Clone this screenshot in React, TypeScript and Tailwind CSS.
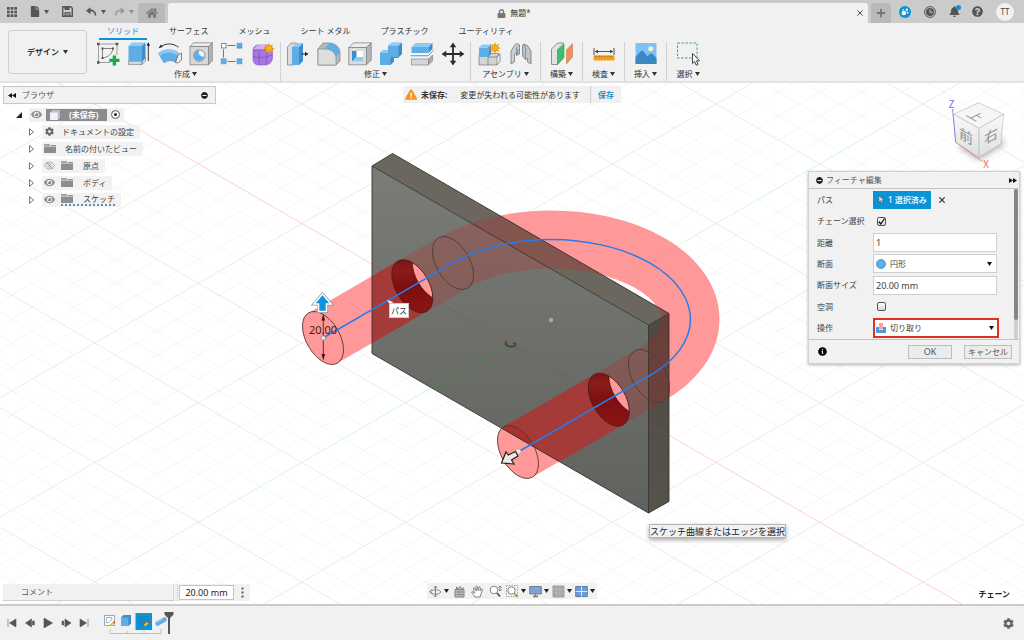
import React from "react";
import {
  FaBell,
  FaCog,
  FaExclamationTriangle,
  FaEye,
  FaFile,
  FaHome,
  FaInfoCircle,
  FaLock,
  FaMinusCircle,
  FaPlus,
  FaQuestionCircle,
} from "react-icons/fa";

type Children = { children: React.ReactNode };

const BLUE = "#5fade6";
const LIGHT = "#8fcbf5";
const DARK = "#3d8ccb";
const EDGE = "#7a7a7a";

function Caret({ className = "" }: { className?: string }) {
  return (
    <svg viewBox="0 0 5 4" className={`h-1 w-[5px] shrink-0 ${className}`} aria-hidden="true">
      <path d="M0 0h5L2.5 4z" fill="currentColor" />
    </svg>
  );
}

function Icon({ children }: Children) {
  return (
    <svg viewBox="0 0 24 24" className="h-6 w-6 shrink-0" fill="none" aria-hidden="true">
      {children}
    </svg>
  );
}

function Spark({ x, y }: { x: number; y: number }) {
  return (
    <g transform={`translate(${x} ${y})`} fill="#f59a0c">
      <path d="M0-6 1.2-2.9 4.2-4.2 2.9-1.2 6 0 2.9 1.2 4.2 4.2 1.2 2.9 0 6-1.2 2.9-4.2 4.2-2.9 1.2-6 0-2.9-1.2-4.2-4.2-1.2-2.9z" />
      <circle r="2.4" fill="#fdb515" />
    </g>
  );
}

/* ---------- ribbon icons ---------- */

const SketchIcon = () => (
  <Icon>
    <path d="M2.5 2v18.5H14M2.5 2H21v11" stroke="#8a8a8a" strokeWidth=".8" />
    <path d="M6.5 6.500h10.500M6.500 6.500v9.500M6.500 16c6-1 9.500-4 10.500-9.500" stroke="#666" strokeWidth=".8" />
    <path d="M1 .7h2.600v2.600H1zM19.700.7h2.600v2.600h-2.600zM1 19.200h2.600v2.600H1zM5.500 5.500h2v2h-2zM16 5.500h2v2h-2zM5.500 15h2v2h-2z" fill="#555" />
    <path d="M16.700 13.500h3.400v3.300h3.400v3.300h-3.400v3.400h-3.400v-3.400h-3.300v-3.300h3.300z" fill="#22a84b" />
  </Icon>
);
const ExtrudeIcon = () => (
  <Icon>
    <path d="M1.500 19h13.500v3.500H1.500zM15 19l3.500-3.500v3.500L15 22.500z" fill="#d8d8d8" stroke={EDGE} strokeWidth=".6" />
    <path d="M1.500 4h13.500v15.500H1.500z" fill={BLUE} />
    <path d="M1.500 4 5 .5h13.500L15 4z" fill={LIGHT} />
    <path d="M15 4 18.500.5V16L15 19.500z" fill={DARK} />
    <path d="M21.300 3v16" stroke="#222" strokeWidth=".9" />
    <path d="m21.300 0 1.700 3.800h-3.400z" fill="#222" />
  </Icon>
);
const RevolveIcon = () => (
  <Icon>
    <path d="M.5 11.500C6 6.500 15 6.500 20.500 11l-3 9.500c-3-2.500-8-2.500-11.500.500z" fill={BLUE} stroke={DARK} strokeWidth=".5" />
    <path d="M.5 11.500C6 6.500 15 6.500 20.500 11l-.8 2.500C14 9.500 7 9.500 1.900 14z" fill={LIGHT} />
    <path d="m20 13 3.500-2v7l-3.500 3-2.500-.5z" fill="#eee" stroke="#555" strokeWidth=".7" />
    <path d="M3 4.500C8 1 15 1 20.500 5.200" stroke="#222" strokeWidth=".9" />
    <path d="M.5 6.200 4.700 5 3 2.500z" fill="#222" />
  </Icon>
);
const HoleIcon = () => (
  <Icon>
    <path d="M1 4.500 4.500.8H23.300L19.500 4.500z" fill="#ececec" stroke={EDGE} strokeWidth=".7" />
    <path d="M19.500 4.500 23.300.8v18l-3.800 4z" fill="#b5b5b5" stroke={EDGE} strokeWidth=".7" />
    <path d="M1 4.500h18.500v18.300H1z" fill="#d7d7d7" stroke={EDGE} strokeWidth=".7" />
    <circle cx="10.300" cy="13.600" r="5.700" fill="#f5f5f5" stroke="#666" strokeWidth=".7" />
    <path d="M10.300 8.300a5.300 5.300 0 1 0 5.200 6.200c-4 .8-7-2.300-5.200-6.200z" fill={BLUE} />
  </Icon>
);
const PatternIcon = () => (
  <Icon>
    <path d="M7.500 3.500h8M3.500 7.500v8M7.500 19.500h8" stroke="#666" strokeWidth=".9" />
    <path d="M1.500 1.500h4.500V6H1.500z" fill="#fff" stroke="#666" strokeWidth=".8" />
    <path d="M17 1.200h5v5h-5zM1.200 16.800h5v5h-5zM17 16.800h5v5h-5z" fill={BLUE} stroke={DARK} strokeWidth=".5" />
  </Icon>
);
const FormIcon = () => (
  <Icon>
    <path d="M2 9c0-4 2-6 6-6h7c4 0 6.500 2 6.500 5v7c0 5-3 8-8 8H8c-4 0-6-2.500-6-6z" fill="#a877e4" stroke="#8853c8" strokeWidth=".6" />
    <path d="M3 7.500C4 4.500 6 3 9 3h6l-2 5z" fill="#cfaef4" />
    <path d="M2 14.500c5 1 9 1 13 .5l6.500-2M8.500 8c-.6 5-.6 10 0 15M15.500 8c.6 5 .6 9-.5 14.700M2.500 8.500c4-.8 9-.8 13 0" stroke="#7d4cc0" strokeWidth=".7" />
    <Spark x={18} y={6.500} />
  </Icon>
);
const PressPullIcon = () => (
  <Icon>
    <path d="M1.500 5 5 1h6v18l-4 4H1.500z" fill="#ddd" stroke={EDGE} strokeWidth=".7" />
    <path d="M6 5h7v18H6z" fill={BLUE} />
    <path d="M6 5 10 1h7l-4 4z" fill={LIGHT} />
    <path d="m13 5 4-4v18l-4 4z" fill={DARK} />
    <path d="M15.500 12H20" stroke="#222" />
    <path d="M22.500 12 19 9.800v4.400z" fill="#222" />
  </Icon>
);
const FilletIcon = () => (
  <Icon>
    <path d="M1 7 6 1h6c6 0 11 4 11 10v8l-4 4H1z" fill="#b9b9b9" stroke={EDGE} strokeWidth=".7" />
    <path d="M1 7h7c6 0 11 4 11 9v7H1z" fill="#dedede" stroke={EDGE} strokeWidth=".6" />
    <path d="m8 6.500 4-5.300c6 .2 10.800 4.300 10.800 10.300l-4 3.500C18 10 13.500 7 8 6.500z" fill={BLUE} />
  </Icon>
);
const ShellIcon = () => (
  <Icon>
    <path d="M.8 5.500 5.500.8h17.700L18.500 5.500z" fill="#ececec" stroke={EDGE} strokeWidth=".7" />
    <path d="m18.500 5.500 4.700-4.700V18l-4.700 4.800z" fill="#b5b5b5" stroke={EDGE} strokeWidth=".7" />
    <path d="M.8 5.500h17.700v17.300H.8z" fill="#dcdcdc" stroke={EDGE} strokeWidth=".7" />
    <path d="M4 9h11v10.500H4z" fill="#fff" />
    <path d="M4 9v10.500L8.500 15V9z" fill={DARK} />
    <path d="M4 19.500h11V15H8.500z" fill={LIGHT} />
  </Icon>
);
const CombineIcon = () => (
  <Icon>
    <path d="m1 11 3-2.800h5V4l3.500-3.300H23V12l-4 4h-4v3.500L11.500 23H1z" fill={DARK} />
    <path d="M1 11h8V4h10.500v11h-8v8H1z" fill={BLUE} />
    <path d="M9 4 12.500.7H23L19.500 4zM1 11l3-2.800h5V11z" fill={LIGHT} />
  </Icon>
);
const SplitIcon = () => (
  <Icon>
    <path d="m1.500 5 4-4h17l-4 4z" fill={LIGHT} />
    <path d="M1.500 5h17v6h-17z" fill={BLUE} />
    <path d="m18.500 5 4-4v6l-4 4z" fill={DARK} />
    <path d="M1.500 17h17v6h-17z" fill="#d6d6d6" stroke={EDGE} strokeWidth=".6" />
    <path d="m18.500 17 4-4v6l-4 4z" fill="#aaa" stroke={EDGE} strokeWidth=".6" />
    <path d="M.5 13.800h17.800L23.500 8" stroke="#fff" strokeWidth="2.600" />
    <path d="M.5 13.800h17.800L23.500 8" stroke={DARK} />
  </Icon>
);
const MoveIcon = () => (
  <Icon>
    <path d="M12 3v18M3 12h18" stroke="#2b2b2b" strokeWidth="1.800" />
    <path d="m12 .5 3.200 4.800H8.800zM12 23.500l3.200-4.800H8.800zM.5 12l4.800-3.200v6.400zM23.500 12l-4.800-3.200v6.400z" fill="#2b2b2b" />
  </Icon>
);
const ComponentIcon = () => (
  <Icon>
    <path d="m1 13 2-1.500h18L19 15v8H1z" fill="#d4d4d4" stroke={EDGE} strokeWidth=".7" />
    <path d="M10 15v8M10 15h9l3-3v7.500L19 23" stroke={EDGE} strokeWidth=".8" />
    <path d="M1 5.500h9.500V15H1z" fill={BLUE} />
    <path d="m1 5.500 3-3h9l-2.500 3z" fill={LIGHT} />
    <path d="m10.500 5.500 2.500-3V12l-2.500 3z" fill={DARK} />
    <Spark x={17} y={6} />
  </Icon>
);
const JointIcon = () => (
  <Icon>
    <path d="M2 9 6 2.500 9 1.500l1.500 1.500v9l-3 1.500v-3L5.500 12v8L2 22z" fill="#cfcfcf" stroke="#777" strokeWidth=".8" />
    <path d="M7.500 13.500V6l3-3" stroke="#777" strokeWidth=".7" />
    <path d="M22 9 18.500 3.500l-4-1.500-1 2v10l3 3.500 2-1v3.500l3.500 2z" fill="#c4c4c4" stroke="#777" strokeWidth=".8" />
    <path d="M16.500 17.500V6l-2-3.500" stroke="#777" strokeWidth=".7" />
    <path d="M8.800 7v5M13.800 9v5" stroke={BLUE} strokeWidth="1.300" />
  </Icon>
);
const PlaneIcon = () => (
  <Icon>
    <path d="M1.500 7 7.500 1h6v14l-6 7.500h-6z" fill="#e2e2e2" stroke={EDGE} strokeWidth=".8" />
    <path d="M7.500 7.500 14 2v13.500l-6.500 7z" fill="#3fbf6b" stroke="#2d9b52" strokeWidth=".6" />
    <path d="m16.500 8 6-6.500V15l-6 7z" fill="#e8935c" stroke="#cf7a44" strokeWidth=".6" />
  </Icon>
);
const MeasureIcon = () => (
  <Icon>
    <path d="M2 6v7M22 6v7M4 9.500h16" stroke="#444" strokeWidth=".9" />
    <path d="m2.500 9.500 3.500-1.800v3.600zM21.500 9.500 18 7.700v3.600z" fill="#444" />
    <path d="M1.500 13.500h21v5h-21z" fill="#f7a11b" />
    <path d="M4 13.500v2M7 13.500v2M10 13.500v2M13 13.500v2M16 13.500v2M19 13.500v2" stroke="#8a5300" strokeWidth=".8" />
  </Icon>
);
const InsertIcon = () => (
  <Icon>
    <path d="M1.500 1h21v21h-21z" fill="#7cc3f5" />
    <path d="M1.500 15 7 9c1-.8 1.800-.3 2.500.5l4 5 2.500-2.700c.8-.6 1.500-.5 2.200 0L22.500 16v6h-21z" fill="#3a88c2" />
    <circle cx="16.800" cy="6.800" r="2.500" fill="#fff3c4" />
  </Icon>
);
const SelectIcon = () => (
  <Icon>
    <path d="M1.500 1h19.500v15H1.500z" stroke="#35b266" strokeDasharray="2.500 1.500" />
    <path d="M16.500 11.500v10l2.200-2 1.500 3.700 1.800-.8-1.500-3.600h3z" fill="#fff" stroke="#333" strokeWidth=".9" />
  </Icon>
);

const GROUPS: { name: string; icons: [string, () => React.ReactElement][] }[] = [
  {
    name: "作成",
    icons: [
      ["スケッチを作成", SketchIcon],
      ["押し出し", ExtrudeIcon],
      ["回転", RevolveIcon],
      ["穴", HoleIcon],
      ["パターン", PatternIcon],
      ["フォームを作成", FormIcon],
    ],
  },
  {
    name: "修正",
    icons: [
      ["プレス/プル", PressPullIcon],
      ["フィレット", FilletIcon],
      ["シェル", ShellIcon],
      ["結合", CombineIcon],
      ["分割", SplitIcon],
      ["移動", MoveIcon],
    ],
  },
  {
    name: "アセンブリ",
    icons: [
      ["新規コンポーネント", ComponentIcon],
      ["ジョイント", JointIcon],
    ],
  },
  { name: "構築", icons: [["平面", PlaneIcon]] },
  { name: "検査", icons: [["計測", MeasureIcon]] },
  { name: "挿入", icons: [["画像", InsertIcon]] },
  { name: "選択", icons: [["選択ツール", SelectIcon]] },
];

const TABS = ["ソリッド", "サーフェス", "メッシュ", "シート メタル", "プラスチック", "ユーティリティ"];

/* ---------- title bar ---------- */

function TitleBar() {
  return (
    <header className="flex h-[23px] items-end bg-[#cbcbcb] text-[#555]">
      <div className="flex h-full w-[138px] shrink-0 items-center pl-[7px]">
        <button aria-label="データパネル">
          <svg viewBox="0 0 10 10" className="h-[10px] w-[10px]" fill="#555">
            <path d="M0 0h2.700v2.700H0zM3.650 0h2.700v2.700h-2.700zM7.300 0H10v2.700H7.300zM0 3.650h2.700v2.700H0zM3.650 3.650h2.700v2.700h-2.700zM7.300 3.650H10v2.700H7.300zM0 7.300h2.700V10H0zM3.650 7.300h2.700V10h-2.700zM7.300 7.300H10V10H7.300z" />
          </svg>
        </button>
        <button aria-label="ファイル" className="ml-[13px] flex items-center gap-1">
          <FaFile className="h-[11px] w-[10px]" />
          <Caret />
        </button>
        <button aria-label="上書き保存" className="ml-[13px]">
          <svg viewBox="0 0 11 11" className="h-[11px] w-[11px]" fill="none">
            <path d="M.7.7h8l1.600 1.600v8H.7z" stroke="#555" strokeWidth="1.400" />
            <path d="M2.500.5h5v3.500h-5zM2.500 6h6v4h-6z" fill="#555" />
            <path d="M3.500 7.300h4M3.500 8.800h4" stroke="#cbcbcb" strokeWidth=".7" />
          </svg>
        </button>
        <button aria-label="元に戻す" className="ml-[13px] flex items-center gap-1">
          <svg viewBox="0 0 11 10" className="h-[10px] w-[11px]" fill="none">
            <path d="M3 3.500c4-.5 6.500 1 6.500 5" stroke="#555" strokeWidth="1.600" />
            <path d="M0 3.700 4.500.2v7z" fill="#555" />
          </svg>
          <Caret />
        </button>
        <button aria-label="やり直し" className="ml-2 flex items-center gap-1 text-[#8c8c8c]">
          <svg viewBox="0 0 11 10" className="h-[10px] w-[11px]" fill="none">
            <path d="M8 3.500c-4-.5-6.500 1-6.500 5" stroke="#999" strokeWidth="1.400" />
            <path d="M11 3.700 6.500.2v7z" fill="#999" />
          </svg>
          <Caret />
        </button>
      </div>
      <button aria-label="ホーム" className="flex h-5 w-[27px] shrink-0 items-center justify-center rounded-t-[3px] bg-[#b9b9b9] text-[#777]">
        <FaHome className="h-3 w-3" />
      </button>
      <div className="mx-[3px] flex h-5 min-w-0 flex-1 items-center rounded-t-[3px] bg-[#f1f1f1] px-1">
        <div className="flex flex-1 items-center justify-center gap-1 text-[8px] font-medium text-[#555]">
          <FaLock className="h-[9px] w-[9px] text-[#777]" />
          <span>無題*</span>
        </div>
        <button aria-label="閉じる" className="p-px">
          <svg viewBox="0 0 6 6" className="h-[6px] w-[6px]">
            <path d="m.3.3 5.400 5.400M5.700.3.3 5.700" stroke="#555" strokeWidth="1" />
          </svg>
        </button>
      </div>
      <button aria-label="新しいタブ" className="flex h-5 w-5 shrink-0 items-center justify-center rounded-t-[3px] bg-[#b9b9b9] text-[#777]">
        <FaPlus className="h-[10px] w-[10px]" />
      </button>
      <div className="flex h-full w-[133px] shrink-0 items-center justify-between pr-[10px] pl-2">
        <button aria-label="拡張機能">
          <svg viewBox="0 0 12 12" className="h-3 w-3">
            <circle cx="6" cy="6" r="6" fill="#0a93d6" />
            <circle cx="4.800" cy="7" r="2.200" fill="#fff" />
            <circle cx="7.800" cy="3.800" r="1.200" fill="#fff" />
            <circle cx="8.500" cy="6.700" r=".9" fill="#fff" />
            <circle cx="4.300" cy="3.800" r=".7" fill="#fff" />
          </svg>
        </button>
        <button aria-label="ジョブの状態">
          <svg viewBox="0 0 12 12" className="h-3 w-3" fill="none">
            <circle cx="6" cy="6" r="5.400" stroke="#555" strokeWidth="1" />
            <circle cx="6" cy="6" r="4" fill="#555" />
            <path d="M6 3.500V6.300h2.500" stroke="#cbcbcb" strokeWidth="1" />
          </svg>
        </button>
        <button aria-label="通知" className="relative">
          <FaBell className="h-[11px] w-[11px]" />
          <span className="absolute -top-px -right-px h-[5px] w-[5px] rounded-full bg-[#0a93d6]" />
        </button>
        <button aria-label="ヘルプ">
          <FaQuestionCircle className="h-[11px] w-[11px]" />
        </button>
        <button className="flex h-[18px] w-[18px] items-center justify-center rounded-full bg-[#f1f1f1] text-[8px] text-[#444]">TT</button>
      </div>
    </header>
  );
}

function Ribbon() {
  return (
    <div className="flex border-b-2 border-[#e2e2e2] bg-[#f1f1f1] text-[8px] text-[#333]">
      <button className="mt-[7px] mr-1 ml-2 flex h-11 w-[79px] shrink-0 items-center justify-center gap-1 rounded-[3px] border border-[#cfcfcf] font-bold">
        デザイン
        <Caret />
      </button>
      <div className="min-w-0 flex-1">
        <nav className="flex h-[17px] gap-[14px] pl-2">
          {TABS.map((tab, i) => (
            <a
              key={tab}
              href="#"
              className={
                i === 0
                  ? "flex items-center border-b-2 border-[#0a93d6] px-2 whitespace-nowrap text-[#0a93d6]"
                  : "flex items-center border-b-2 border-transparent px-2 whitespace-nowrap"
              }
            >
              {tab}
            </a>
          ))}
        </nav>
        <div className="flex pt-[2px]">
          {GROUPS.map((group, i) => (
            <section
              key={group.name}
              className={
                i === GROUPS.length - 1
                  ? "flex min-w-[42px] flex-col items-center px-[5px]"
                  : i === 2
                    ? "flex min-w-[70px] flex-col items-center border-r border-[#d0d0d0] px-[5px]"
                    : "flex min-w-[42px] flex-col items-center border-r border-[#d0d0d0] px-[5px]"
              }
            >
              <div className="flex gap-[7px]">
                {group.icons.map(([label, Glyph]) => (
                  <button key={label} aria-label={label}>
                    <Glyph />
                  </button>
                ))}
              </div>
              <button className="flex h-[15px] items-center gap-[2px] whitespace-nowrap">
                {group.name}
                <Caret />
              </button>
            </section>
          ))}
        </div>
      </div>
    </div>
  );
}

/* ---------- 3D canvas ---------- */

const SLOPE = 0.577;
const ORIGIN = { x: 509, y: 343 };
const STEP = 23.9;

function GridLines() {
  const lines = [];
  for (let k = -40; k <= 40; k++) {
    if (k === 0) continue;
    const major = k % 5 === 0;
    const y = ORIGIN.y + k * STEP;
    const stroke = major ? "#e6e6e6" : "#f4f4f4";
    lines.push(
      <path
        key={k}
        d={`M-200 ${y - (ORIGIN.x + 200) * SLOPE}L1224 ${y + (1224 - ORIGIN.x) * SLOPE}M-200 ${y + (ORIGIN.x + 200) * SLOPE}L1224 ${y - (1224 - ORIGIN.x) * SLOPE}`}
        stroke={stroke}
        strokeWidth=".8"
      />,
    );
  }
  return <g>{lines}</g>;
}

const PLATE = "M372 166 392.500 153.500 669 313.500V501.500L648.500 513 372 353.500z";
const SWEEP =
  "M323 338 453 262.800A139.500 80 0 0 1 551 239.500A139.500 80 0 0 1 690.500 319.500A139.500 80 0 0 1 649 376L518 452";

function Disc({ x, y, ...rest }: { x: number; y: number } & React.SVGProps<SVGEllipseElement>) {
  return <ellipse rx="29" ry="16.750" transform={`translate(${x} ${y}) rotate(60)`} {...rest} />;
}

function PipeHole({ x, y, id }: { x: number; y: number; id: string }) {
  return (
    <g>
      <clipPath id={id}>
        <Disc x={x} y={y} />
      </clipPath>
      <Disc x={x} y={y} fill="url(#bore)" />
      <g clipPath={`url(#${id})`}>
        <Disc x={x + 20.500} y={y - 12} fill="#ff9a9a" stroke="#5a1010" strokeWidth=".7" />
      </g>
      <Disc x={x} y={y} stroke="#4a1c1a" strokeWidth=".8" />
    </g>
  );
}

function Canvas() {
  return (
    <svg viewBox="0 83 1024 521" preserveAspectRatio="xMidYMid slice" className="absolute inset-0 h-full w-full bg-white" fill="none" role="img" aria-label="3Dモデル">
      <defs>
        <linearGradient id="face" x1="0" y1="0" x2="0" y2="1">
          <stop offset="0" stopColor="#797c77" />
          <stop offset="1" stopColor="#60625d" />
        </linearGradient>
        <linearGradient id="side" x1="0" y1="0" x2="0" y2="1">
          <stop offset="0" stopColor="#4c4a43" />
          <stop offset="1" stopColor="#56534b" />
        </linearGradient>
        <linearGradient id="bore" x1="0" y1="0" x2="1" y2=".3">
          <stop offset="0" stopColor="#6f0f0f" />
          <stop offset=".3" stopColor="#8c1c1c" />
          <stop offset=".6" stopColor="#7c0f0f" />
          <stop offset="1" stopColor="#8a1414" />
        </linearGradient>
        <linearGradient id="cubeFace" x1="0" y1="0" x2="0" y2="1">
          <stop offset="0" stopColor="#fafafa" />
          <stop offset="1" stopColor="#dedede" />
        </linearGradient>
        <filter id="soft" x="-50%" y="-50%" width="200%" height="200%">
          <feGaussianBlur stdDeviation="3" />
        </filter>
        <clipPath id="plate">
          <path d={PLATE} />
        </clipPath>
      </defs>

      <GridLines />
      <path d="M-200-66 1224 755.500" stroke="#ffc4c4" strokeWidth=".8" />
      <path d="M-200 752 1224-69.500" stroke="#c8f7c8" strokeWidth=".8" />

      <path d={SWEEP} stroke="#ff9999" strokeWidth="58" />
      <path d="M622 278 676 247" stroke="#e8a08a" strokeWidth=".8" />
      <Disc x={323} y={338} fill="#ff9999" />
      <Disc x={518} y={452} fill="#ff9999" />

      <path d="M372 166 648.500 325V513L372 353.500z" fill="url(#face)" />
      <path d="M372 166 392.500 153.500 669 313.500 648.500 325z" fill="#6c675e" />
      <path d="M648.500 325 669 313.500V501.500L648.500 513z" fill="url(#side)" />

      <g clipPath="url(#plate)">
        <path d={SWEEP} stroke="#d01818" strokeOpacity=".22" strokeWidth="58" />
        <path d="M372 264 669 435.500" stroke="#a04848" strokeOpacity=".6" strokeWidth=".8" />
        <path d="M509 344 430 389.500" stroke="#4a8a44" strokeWidth=".9" />
        <path d="M323 338 412.300 286.200" stroke="#a53b38" strokeWidth="58" />
        <path d="M518 452 608.800 399.700" stroke="#a53b38" strokeWidth="58" />
        <Disc x={518} y={452} fill="#a8302f" />
      </g>
      <path d="M372 166 648.500 325V513L372 353.500zM372 166 392.500 153.500 669 313.500 648.500 325M669 313.500V501.500L648.500 513" stroke="#33332f" strokeWidth=".9" />

      <PipeHole x={412.300} y={286.200} id="holeA" />
      <PipeHole x={608.800} y={399.700} id="holeB" />
      <Disc x={453} y={263} stroke="#4d3b38" strokeWidth=".8" />
      <Disc x={649} y={376} stroke="#4d3b38" strokeWidth=".8" />
      <Disc x={323} y={338} stroke="#5a3030" strokeWidth=".8" />
      <Disc x={518} y={452} stroke="#5a3030" strokeWidth=".8" />

      <circle cx="551" cy="320" r="2.200" fill="#a9aaa6" />
      <path d="M507 341.500c-2.500 1.500-1.500 4 2 4.800 3 .6 6 0 6.500-1.800.2-1-1-1.500-2.500-1" stroke="#41433f" strokeWidth="1.700" />

      <path d={SWEEP} stroke="#2a7ae8" strokeWidth="1.500" />

      <path d="M323.300 316v42" stroke="#4a0f0f" strokeWidth=".8" />
      <path d="m323.300 314 1.800 6.500h-3.600zM323.300 360.500l1.800-6.500h-3.600z" fill="#4a0f0f" />
      <text x="323" y="334" textAnchor="middle" fontSize="11" fill="#4a1515" className="font-['Noto_Sans',sans-serif]">
        20.00
      </text>
      <circle cx="323.300" cy="338" r="2.300" fill="#ffe3e3" stroke="#777" strokeWidth=".7" />
      <path d="M322.500 294 331 304h-4.500v7.500h-8V304H314z" fill="#0f93dc" stroke="#8a9299" strokeWidth="3" />
      <path d="M322.500 294 331 304h-4.500v7.500h-8V304H314z" fill="#0f93dc" stroke="#fff" strokeWidth="1.600" />
      <path d="m387 300 6 2-2.500 3.500z" fill="#fff" />

      <circle cx="518.500" cy="451.500" r="2.500" fill="#ffe3e3" stroke="#999" strokeWidth=".6" />
      <path d="m501.500 463 4.500-11 2.300 3 7.200-3.500 2.500 4.500-6.500 4 2.500 4z" fill="#e9ebe6" stroke="#222" strokeWidth="1.200" />

      <g>
        <path d="m957 146 22 14 26-16-4-6z" fill="#777" opacity=".55" filter="url(#soft)" />
        <path d="m953.500 114.300 25-11.600 25.200 11.600-24.700 14z" fill="#f6f6f6" stroke="#b5b5b5" strokeWidth=".6" />
        <path d="m953.500 114.300 25.500 14v29l-23.300-15z" fill="url(#cubeFace)" stroke="#b5b5b5" strokeWidth=".6" />
        <path d="m1003.700 114.300-24.700 14v29l21.700-13.300z" fill="url(#cubeFace)" stroke="#b5b5b5" strokeWidth=".6" />
        <g fontSize="14" fill="#8d9096" textAnchor="middle" className="font-['Noto_Sans_CJK_JP',sans-serif]">
          <text transform="translate(966 141.500) skewY(28)">前</text>
          <text transform="translate(991 141) skewY(-28)">右</text>
          <text transform="matrix(.8 .45 -.85 .42 971 118.500)">上</text>
        </g>
        <path d="m952.500 109 3.200 33" stroke="#8080f0" strokeWidth=".9" />
        <path d="m955.700 142.300 26.500 19" stroke="#f08080" strokeWidth=".9" />
        <g fontSize="10" textAnchor="middle" className="font-['Noto_Sans_CJK_JP',sans-serif]">
          <text x="951.500" y="108" fill="#6d6df2">Z</text>
          <text x="986" y="168" fill="#f26a6a">X</text>
        </g>
      </g>
    </svg>
  );
}

/* ---------- browser tree ---------- */

function FolderIcon() {
  return (
    <svg viewBox="0 0 12 9" className="h-[9px] w-3 shrink-0" fill="#8d8d8d" aria-hidden="true">
      <path d="M0 2.600h12V9H0zM0 .3h6v1.500H0zM7 1h5v1H7z" />
    </svg>
  );
}

function EyeIcon({ off = false }: { off?: boolean }) {
  if (!off) return <FaEye className="h-[11px] w-[11px] shrink-0 text-[#8d8d8d]" />;
  return (
    <svg viewBox="0 0 12 9" className="h-[9px] w-[11px] shrink-0" fill="none" stroke="#999" aria-hidden="true">
      <path d="M.5 4.500c3-5 8-5 11 0-3 5-8 5-11 0zM2 .5l8 8" strokeWidth=".9" />
      <circle cx="6" cy="4.500" r="1.800" strokeWidth=".9" />
    </svg>
  );
}

function Expander() {
  return (
    <button aria-label="展開" className="mr-2">
      <svg viewBox="0 0 5 8" className="h-2 w-[5px]" fill="#fff" stroke="#555" strokeWidth=".8">
        <path d="M.5.7 4.500 4 .5 7.300z" />
      </svg>
    </button>
  );
}

function TreeRow({ children }: Children) {
  return (
    <li className="flex h-[17px] items-center pl-[26px]">
      <Expander />
      <div className="flex h-[14px] items-center bg-[#f1f1f1]/95 pr-[6px] pl-[2px]">{children}</div>
    </li>
  );
}

function Browser() {
  return (
    <aside className="absolute top-[3px] left-[3px] w-[213px] text-[8px] text-[#3f3f3f]">
      <div className="flex h-[18px] items-center border border-[#c9c9c9] bg-[#f1f1f1] px-1 text-[#555]">
        <button aria-label="折りたたむ">
          <svg viewBox="0 0 8 5" className="h-[5px] w-2">
            <path d="M4 0v5L0 2.500zM8 0v5L4 2.500z" fill="#111" />
          </svg>
        </button>
        <h2 className="ml-[6px] flex-1">ブラウザ</h2>
        <button aria-label="最小化" className="mr-[3px] text-[#222]">
          <FaMinusCircle className="h-[7px] w-[7px]" />
        </button>
      </div>
      <ul className="pt-[2px]">
        <li className="flex h-[17px] items-center pl-[13px]">
          <svg viewBox="0 0 6 6" className="mr-[7px] h-[6px] w-[6px]">
            <path d="M6 0v6H0z" fill="#222" />
          </svg>
          <div className="flex h-[14px] items-center bg-[#f1f1f1] pl-[2px]">
            <EyeIcon />
            <div className="ml-1 flex h-3 w-[61px] items-center bg-[#8c8c8c] pl-1 font-bold text-white">
              <svg viewBox="0 0 10 10" className="h-[10px] w-[10px]">
                <path d="M0 2.500 2.500 0H10v7.500L8 10H0z" fill="#b9c0cc" />
                <path d="M0 2.500h7.700V10H0z" fill="#eef1f6" />
              </svg>
              <span className="ml-[9px]">(未保存)</span>
            </div>
            <input type="radio" defaultChecked aria-label="アクティブなコンポーネント" className="mx-[4px] h-[9px] w-[9px] appearance-none rounded-full border border-[#888] bg-[#222] ring-2 ring-white ring-inset" />
          </div>
        </li>
        <TreeRow>
          <FaCog className="mx-px h-[9px] w-[9px] text-[#666]" />
          <span className="ml-[7px]">ドキュメントの設定</span>
        </TreeRow>
        <TreeRow>
          <FolderIcon />
          <span className="ml-[9px]">名前の付いたビュー</span>
        </TreeRow>
        <TreeRow>
          <EyeIcon off />
          <span className="ml-[6px] flex items-center gap-[10px]">
            <FolderIcon />
            原点
          </span>
        </TreeRow>
        <TreeRow>
          <EyeIcon />
          <span className="ml-[6px] flex items-center gap-[10px]">
            <FolderIcon />
            ボディ
          </span>
        </TreeRow>
        <TreeRow>
          <EyeIcon />
          <span className="ml-[6px] flex h-3 items-center gap-[10px] border-b-2 border-dotted border-[#6b86c0]">
            <FolderIcon />
            スケッチ
          </span>
        </TreeRow>
      </ul>
    </aside>
  );
}

function UnsavedNotice() {
  return (
    <div role="status" className="absolute top-[3px] left-1/2 flex h-[17px] -translate-x-1/2 items-center bg-[#f1f1f1] pr-[7px] pl-[2px] text-[8px] whitespace-nowrap text-[#333]">
      <FaExclamationTriangle className="h-[11px] w-3 text-[#f7941d]" />
      <strong className="ml-1">未保存:</strong>
      <span className="ml-[13px]">変更が失われる可能性があります</span>
      <button className="ml-[10px] h-full border-l border-[#ccc] pl-[7px] font-medium text-[#0a7fc0]">保存</button>
    </div>
  );
}

/* ---------- feature dialog ---------- */

const FIELD = "flex h-[19px] w-[124px] items-center border border-[#cfcfcf] bg-white px-[2px]";

function Check({ id, checked }: { id: string; checked?: boolean }) {
  return (
    <span className="grid pl-1">
      <input id={id} type="checkbox" defaultChecked={checked} className="col-start-1 row-start-1 h-[9px] w-[9px] appearance-none rounded-[2px] border border-[#555] bg-linear-to-b from-white to-[#d5d5d5]" />
      {checked && (
        <svg viewBox="0 0 9 9" className="pointer-events-none col-start-1 row-start-1 h-[9px] w-[9px]" fill="none">
          <path d="M1.800 4.500 3.800 7 7.500 1.500" stroke="#111" strokeWidth="1.300" />
        </svg>
      )}
    </span>
  );
}

function FieldRow({ label, id, children }: { label: string; id: string } & Children) {
  return (
    <div className="flex items-center pl-2">
      <label htmlFor={id} className="w-14 shrink-0 whitespace-nowrap">
        {label}
      </label>
      {children}
    </div>
  );
}

function FeatureDialog() {
  return (
    <form className="absolute top-[88px] right-1 w-[212px] border border-[#d2d2d2] bg-[#f1f1f1] text-[8px] text-[#3f3f3f] shadow-[0_1px_3px_rgba(0,0,0,0.3)]">
      <div className="flex h-[17px] items-center border-b border-[#c4c4c4] pr-[2px] pl-[7px] text-[#555]">
        <FaMinusCircle className="h-[7px] w-[7px] text-[#222]" />
        <h2 className="ml-[3px] flex-1">フィーチャ編集</h2>
        <svg viewBox="0 0 8 5" className="h-[5px] w-2">
          <path d="M0 0v5l4-2.500zM4 0v5l4-2.500z" fill="#111" />
        </svg>
      </div>
      <div className="flex">
        <div className="grid h-[150px] flex-1 grid-rows-7 items-center">
          <FieldRow label="パス" id="path">
            <button id="path" type="button" className="flex h-[18px] w-[58px] items-center gap-[3px] bg-[#0a93d6] pl-[5px] font-medium whitespace-nowrap text-white">
              <svg viewBox="0 0 7 10" className="h-[9px] w-[7px]">
                <path d="M.5.5v7.500L2.400 6.500l1.200 3L5 9 3.900 6h2.600z" fill="#f4d9d2" stroke="#444" strokeWidth=".6" />
              </svg>
              1 選択済み
            </button>
            <button type="button" aria-label="選択をクリア" className="ml-2">
              <svg viewBox="0 0 6 6" className="h-[6px] w-[6px]">
                <path d="m.3.3 5.400 5.400M5.700.3.3 5.700" stroke="#333" strokeWidth="1.200" />
              </svg>
            </button>
          </FieldRow>
          <FieldRow label="チェーン選択" id="chain">
            <Check id="chain" checked />
          </FieldRow>
          <FieldRow label="距離" id="distance">
            <span className={FIELD}>
              <input id="distance" defaultValue="1" className="w-full bg-transparent text-[9px] outline-none" />
            </span>
          </FieldRow>
          <FieldRow label="断面" id="section">
            <span className={FIELD}>
              <svg viewBox="0 0 10 10" className="h-[10px] w-[10px] shrink-0">
                <circle cx="5" cy="5" r="4.600" fill={BLUE} stroke={DARK} strokeWidth=".7" />
              </svg>
              <select id="section" className="ml-1 min-w-0 flex-1 appearance-none bg-transparent outline-none">
                <option>円形</option>
              </select>
              <Caret className="mr-[2px] text-[#111]" />
            </span>
          </FieldRow>
          <FieldRow label="断面サイズ" id="size">
            <span className={FIELD}>
              <input id="size" defaultValue="20.00 mm" className="w-full bg-transparent text-[9px] outline-none" />
            </span>
          </FieldRow>
          <FieldRow label="空洞" id="hollow">
            <Check id="hollow" />
          </FieldRow>
          <FieldRow label="操作" id="operation">
            <span className="flex h-5 w-[126px] items-center border-2 border-[#e0301e] bg-white px-px">
              <svg viewBox="0 0 10 10" className="h-[10px] w-[10px] shrink-0">
                <path d="M0 4h3v3h4V4h3v6H0z" fill="#4a9bd8" />
                <path d="M3 0h4v6.500H3z" fill="#f3a3a3" />
              </svg>
              <select id="operation" className="ml-1 min-w-0 flex-1 appearance-none bg-transparent outline-none">
                <option>切り取り</option>
              </select>
              <Caret className="mr-[2px] text-[#111]" />
            </span>
          </FieldRow>
        </div>
        <div className="mr-px w-1 bg-[#d0d0d0]">
          <div className="h-[131px] rounded-full bg-[#858585]" />
        </div>
      </div>
      <div className="flex h-6 items-center border-t border-[#c4c4c4] pr-[7px] pl-[9px] text-[#555]">
        <FaInfoCircle className="h-[9px] w-[9px] text-black" />
        <button type="button" className="ml-auto h-[14px] w-11 border border-[#bdbdbd] bg-[#ececec] text-[9px] leading-3">
          OK
        </button>
        <button type="button" className="ml-3 h-[14px] w-12 border border-[#bdbdbd] bg-[#ececec] leading-3">
          キャンセル
        </button>
      </div>
    </form>
  );
}

/* ---------- bottom overlays ---------- */

function NavIcon({ label, children, menu }: { label: string; menu?: boolean } & Children) {
  return (
    <button aria-label={label} className={menu ? "flex items-center gap-[2px]" : "flex items-center px-px"}>
      <svg viewBox="0 0 13 13" className="h-[13px] w-[13px]" fill="none" stroke="#777" strokeWidth=".9">
        {children}
      </svg>
      {menu && <Caret className="text-[#222]" />}
    </button>
  );
}

function NavBar() {
  return (
    <div className="absolute bottom-[5px] left-1/2 flex h-4 -translate-x-1/2 items-center gap-[3px] bg-[#f1f1f1] px-[2px]">
      <NavIcon label="オービット" menu>
        <ellipse cx="6.500" cy="7" rx="5" ry="2.200" />
        <path d="M6.500 1v11M5 3l1.500-2L8 3M5 10.500 6.500 12 8 10.500M2.500 4.500.8 7l2.700 1.500" />
      </NavIcon>
      <NavIcon label="ビュー正面">
        <path d="M2 4.500h9v7.500H2zM3.500 4V2l2 1.500L7 1.500l1.500 2L11 3" fill="#bbb" />
        <path d="M3.500 7h6M3.500 9.500h6" />
      </NavIcon>
      <NavIcon label="画面移動">
        <path d="M4 12c-1-2-2.500-3.500-3.500-5 1-.8 2 .2 3 1.200L2.500 3c.8-.8 1.500 0 1.800 1l.9 2L5 1.500c.7-.9 1.500-.3 1.600.5L7 5.500 8 2c.8-.7 1.500 0 1.300.8L9 6l1.500-2c.8-.3 1.300.3 1 1L10 9l-.8 3z" fill="#fff" />
      </NavIcon>
      <NavIcon label="ズーム">
        <circle cx="5" cy="5" r="3.800" fill="#fff" />
        <path d="m8 8 3 3.500" stroke="#555" strokeWidth="1.800" />
        <path d="M11 1v5M9.500 2.500 11 1l1.500 1.500M9.500 4.500 11 6l1.500-1.500" />
      </NavIcon>
      <NavIcon label="フィット" menu>
        <path d="M.5.5h11v11H.5z" strokeDasharray="1.500 1" strokeWidth=".6" />
        <circle cx="5.500" cy="5.500" r="3.700" fill="#fff" />
        <path d="m8.500 8.500 3 3.500" stroke="#b08a4a" strokeWidth="1.800" />
      </NavIcon>
      <NavIcon label="表示設定" menu>
        <path d="M.7 1.500h11.600v7.500H.7z" fill="#7ba6dc" />
        <path d="M4 11.500h5M6.500 9v2.500" strokeWidth="1.500" />
      </NavIcon>
      <NavIcon label="グリッドとスナップ" menu>
        <path d="M1 1h11v11H1z" fill="#a8a8a8" stroke="#999" />
        <path d="M1 4.500h11M1 8h11M4.500 1v11M8 1v11" stroke="#bdbdbd" strokeWidth=".6" />
      </NavIcon>
      <NavIcon label="ビューポート" menu>
        <path d="M.7 1.500h11.600v10H.7z" fill="#6d9bd6" stroke="#55749e" />
        <path d="M6.500 1.500v10M.7 6.500h11.600" stroke="#e8eef7" />
      </NavIcon>
    </div>
  );
}

function CommentBar() {
  return (
    <div className="absolute bottom-[3px] left-[3px] flex h-[17px] items-center bg-[#f1f1f1] text-[8px] text-[#555]">
      <label htmlFor="value" className="flex h-full w-[170px] items-center border-b border-[#cfcfcf] pl-[18px]">
        コメント
      </label>
      <div className="h-full w-[5px] border-x border-dotted border-[#bbb]" />
      <input id="value" defaultValue="20.00 mm" className="ml-px h-[15px] w-[55px] border border-[#c4c4c4] bg-white text-center text-[9px] text-[#222]" />
      <button aria-label="その他" className="flex w-4 justify-center">
        <svg viewBox="0 0 3 11" className="h-[11px] w-[3px]" fill="#777">
          <circle cx="1.500" cy="1.500" r="1.200" />
          <circle cx="1.500" cy="5.500" r="1.200" />
          <circle cx="1.500" cy="9.500" r="1.200" />
        </svg>
      </button>
    </div>
  );
}

const PLAYBACK: [string, string][] = [
  ["先頭へ", "M1 1v8M9 1v8L2.500 5z"],
  ["前へ", "M6.500 1v8L.5 5zM7.500 3h1.800v4H7.500z"],
  ["再生", "M1 0v10l8.500-5z"],
  ["次へ", "M4 1v8l6-4zM1 3h1.800v4H1z"],
  ["末尾へ", "M9 1v8M1 1v8l6.500-4z"],
];

function Timeline() {
  return (
    <footer className="flex h-9 items-center border-t-2 border-[#cbcbcb] bg-[#f1f1f1] pr-[10px] pl-[7px]">
      <div className="flex gap-2">
        {PLAYBACK.map(([label, d]) => (
          <button key={label} aria-label={label}>
            <svg viewBox="0 0 10 10" className="h-[10px] w-[10px]" fill="#555" stroke="#555" strokeWidth=".6">
              <path d={d} />
            </svg>
          </button>
        ))}
      </div>
      <svg viewBox="0 0 76 26" className="ml-[10px] h-[26px] w-[76px]" fill="none" role="img" aria-label="タイムライン">
        <path d="M11 19v4.500h51V19M28 21v2.500M45 21v2.500" stroke="#bdbdbd" />
        <g>
          <path d="M5.500 5.500h10v10h-10z" stroke="#7c93ad" strokeWidth=".8" fill="#fff" />
          <path d="M7.500 7.500h5.500c0 3-2 5-5.500 5.500z" stroke="#7c93ad" strokeWidth=".7" />
          <path d="m11 15.500 3.500-2.800" stroke="#f7b52b" strokeWidth="2" />
          <path d="m14.500 12.700 1-.8" stroke="#e23c1e" strokeWidth="2" />
        </g>
        <path d="M22 7.500 24.500 5h7.500v8.500L29.500 16H22z" fill={DARK} />
        <path d="M22 7.500h7.500V16H22z" fill={BLUE} />
        <path d="M36.500 3H53v17H36.500z" fill="#0a93d6" />
        <path d="M40 6.500h8.500v8.500H40zM42 8.500h4v4h-4z" stroke="#2a78a8" strokeWidth=".7" />
        <path d="m45.500 15.500 3.500-2.800" stroke="#ffc21a" strokeWidth="2.200" />
        <path d="m49 13 1.200-1" stroke="#e23c1e" strokeWidth="2.200" />
        <path d="m58.500 13.500 7-4" stroke={BLUE} strokeWidth="4.500" strokeLinecap="round" />
        <path d="M57.500 12.500 64 8.800" stroke={LIGHT} strokeWidth="1.200" strokeLinecap="round" />
        <path d="M65.500 2h9v2.500L71 8v16h-2V8l-3.500-3.500z" fill="#555" />
      </svg>
      <button aria-label="設定" className="ml-auto text-[#666]">
        <FaCog className="h-[11px] w-[11px]" />
      </button>
    </footer>
  );
}

export default function App() {
  return (
    <div lang="ja" className="flex min-h-screen flex-col bg-[#f1f1f1] font-['Noto_Sans','Noto_Sans_CJK_JP',sans-serif] leading-none">
      <TitleBar />
      <Ribbon />
      <main className="relative flex-1 overflow-hidden">
        <Canvas />
        <Browser />
        <UnsavedNotice />
        <div className="absolute top-[220px] left-[38%] flex h-[15px] items-center border border-[#ccc] bg-white px-px text-[8px] text-[#333]">パス</div>
        <div role="tooltip" className="absolute top-[441px] left-[649px] flex h-[14px] items-center border border-[#b5b5b5] bg-[#f1f1f1] text-[9px] whitespace-nowrap text-[#222] shadow-[0_2px_4px_rgba(0,0,0,0.35)]">
          スケッチ曲線またはエッジを選択
        </div>
        <FeatureDialog />
        <CommentBar />
        <NavBar />
        <p className="absolute right-[14px] bottom-[6px] text-[8px] font-bold text-[#222]">チェーン</p>
      </main>
      <Timeline />
    </div>
  );
}
